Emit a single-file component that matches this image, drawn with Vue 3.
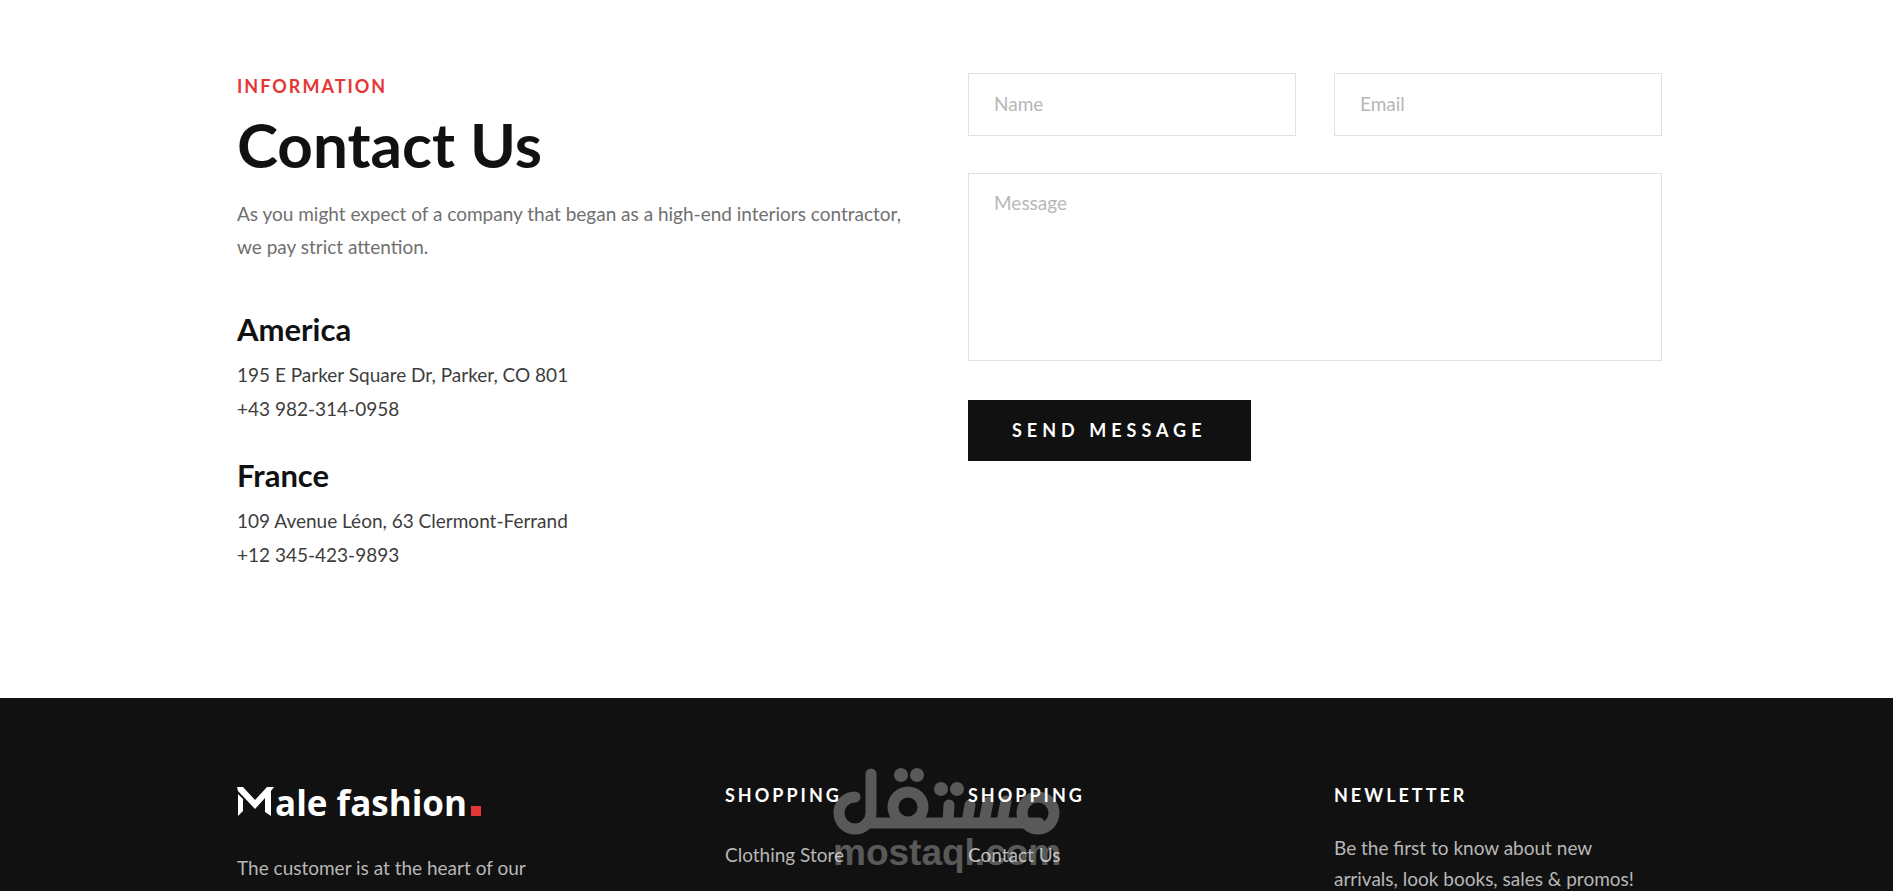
<script setup>
import { ref } from 'vue'

const offices = [
  { name: 'America', address: '195 E Parker Square Dr, Parker, CO 801', phone: '+43 982-314-0958' },
  { name: 'France', address: '109 Avenue Léon, 63 Clermont-Ferrand', phone: '+12 345-423-9893' },
]

const name = ref('')
const email = ref('')
const message = ref('')
</script>

<template>
  <div class="page">
    <main class="container contact">
      <section class="info">
        <p class="eyebrow">INFORMATION</p>
        <h1>Contact Us</h1>
        <p class="lead">
          As you might expect of a company that began as a high-end interiors contractor, we pay
          strict attention.
        </p>
        <ul class="offices">
          <li v-for="office in offices" :key="office.name">
            <h2>{{ office.name }}</h2>
            <p>{{ office.address }}<br />{{ office.phone }}</p>
          </li>
        </ul>
      </section>

      <form class="form" @submit.prevent>
        <input v-model="name" type="text" placeholder="Name" aria-label="Name" />
        <input v-model="email" type="email" placeholder="Email" aria-label="Email" />
        <textarea v-model="message" placeholder="Message" aria-label="Message"></textarea>
        <button type="submit">SEND MESSAGE</button>
      </form>
    </main>

    <footer class="footer">
      <div class="container columns">
        <section class="about">
          <a class="brand" href="#" aria-label="Male fashion">
            <svg class="brand-mark" viewBox="0 0 37 29" aria-hidden="true">
              <path d="M0 0H6L18 13L30 0H37L34 4V29L28 25V11L18 22L1 4Z" />
              <path d="M1 7L6 12V24L1 29Z" />
            </svg>
            <span>ale fashion</span>
            <i class="brand-dot"></i>
          </a>
          <p class="about-text">The customer is at the heart of our</p>
        </section>
        <nav class="links" aria-label="Shopping">
          <h3>SHOPPING</h3>
          <a href="#">Clothing Store</a>
        </nav>
        <nav class="links" aria-label="Help">
          <h3>SHOPPING</h3>
          <a href="#">Contact Us</a>
        </nav>
        <section class="newsletter">
          <h3>NEWLETTER</h3>
          <p>Be the first to know about new arrivals, look books, sales &amp; promos!</p>
        </section>
      </div>

      <svg class="watermark" viewBox="0 0 228 108" aria-hidden="true">
        <g class="strokes">
          <path d="M22 30A16 16 0 1 0 38 46V7" />
          <path d="M34 56H206" />
          <circle cx="75" cy="40" r="15" />
          <circle cx="205" cy="46" r="16" />
          <path d="M116 38L115 55M137 38L134 55M155 35L151 55M173 34L169 55" />
        </g>
        <circle cx="68" cy="8" r="7" />
        <circle cx="84" cy="8" r="7" />
        <circle cx="108" cy="22" r="7" />
        <circle cx="124" cy="22" r="7" />
        <text x="0" y="98">mostaql.com</text>
      </svg>
    </footer>
  </div>
</template>

<style>
html {
  scrollbar-width: none;
}
body {
  margin: 0;
  background: #ffffff;
}
</style>

<style scoped>
.page {
  display: flex;
  flex-direction: column;
  min-height: 100vh;
  color: #111111;
  font-family: Lato, 'Open Sans', sans-serif;
  font-size: 19px;
}
h1,
h2,
h3,
p,
ul {
  margin: 0;
  padding: 0;
}
.container {
  box-sizing: border-box;
  width: 100%;
  max-width: 1431px;
  margin: 0 auto;
  padding-left: 6px;
}
.contact {
  display: grid;
  grid-template-columns: 1fr 1fr;
  column-gap: 37px;
  padding-top: 73px;
  padding-bottom: 126px;
}
.eyebrow {
  color: #e53637;
  font-size: 18px;
  font-weight: 700;
  letter-spacing: 2px;
  line-height: 26px;
}
h1 {
  margin-top: 8px;
  font-size: 62px;
  font-weight: 700;
  line-height: 75px;
}
.lead {
  margin-top: 15px;
  padding-right: 16px;
  color: #707070;
  line-height: 33px;
}
.offices {
  display: grid;
  gap: 31px;
  margin-top: 48px;
  list-style: none;
}
h2 {
  font-size: 31px;
  font-weight: 700;
  line-height: 36px;
}
.offices p {
  margin-top: 11px;
  color: #3d3d3d;
  line-height: 34px;
}
.form {
  display: grid;
  grid-template-columns: 1fr 1fr;
  column-gap: 38px;
  align-content: start;
  justify-items: start;
}
.form input,
.form textarea {
  box-sizing: border-box;
  width: 100%;
  height: 63px;
  margin: 0;
  padding: 0 25px 2px;
  border: 1px solid #e1e1e1;
  border-radius: 0;
  background: #ffffff;
  color: #111111;
  font: inherit;
}
.form textarea {
  grid-column: 1 / -1;
  height: 188px;
  margin-top: 37px;
  padding-top: 16px;
  line-height: 26px;
  resize: none;
}
.form ::placeholder {
  color: #b7b7b7;
  opacity: 1;
}
.form button {
  grid-column: 1 / -1;
  height: 61px;
  margin-top: 39px;
  padding: 0 44px 2px;
  border: 0;
  background: #111111;
  color: #ffffff;
  font: inherit;
  font-size: 18px;
  font-weight: 700;
  letter-spacing: 5px;
}
.footer {
  position: relative;
  flex: 1;
  background: #111111;
  color: #b7b7b7;
}
.columns {
  display: grid;
  grid-template-columns: 488fr 243fr 366fr 328fr;
  padding-top: 84px;
}
.brand {
  display: flex;
  align-items: baseline;
  margin-top: 4px;
  color: #ffffff;
  font-family: 'Open Sans', sans-serif;
  font-size: 35px;
  font-weight: 700;
  line-height: 34px;
  text-decoration: none;
}
.brand-mark {
  width: 37px;
  height: 29px;
  margin-right: 1px;
  fill: #ffffff;
}
.brand-dot {
  width: 10px;
  height: 10px;
  margin-left: 4px;
  background: #e53637;
}
.about-text {
  margin-top: 32px;
  line-height: 31px;
}
h3 {
  color: #ffffff;
  font-size: 18px;
  font-weight: 700;
  letter-spacing: 3px;
  line-height: 26px;
}
.links a {
  display: inline-block;
  margin-top: 32px;
  color: #b7b7b7;
  line-height: 30px;
  text-decoration: none;
}
.newsletter p {
  margin-top: 24px;
  padding-right: 16px;
  line-height: 31px;
}
.watermark {
  position: absolute;
  top: 69px;
  left: calc(50% - 114px);
  width: 228px;
  height: 108px;
  fill: #ffffff;
  opacity: 0.3;
  pointer-events: none;
}
.strokes {
  fill: none;
  stroke: #ffffff;
  stroke-linecap: round;
  stroke-width: 11;
}
.watermark text {
  font-family: 'Liberation Sans', sans-serif;
  font-size: 37px;
  font-weight: 700;
}
</style>
